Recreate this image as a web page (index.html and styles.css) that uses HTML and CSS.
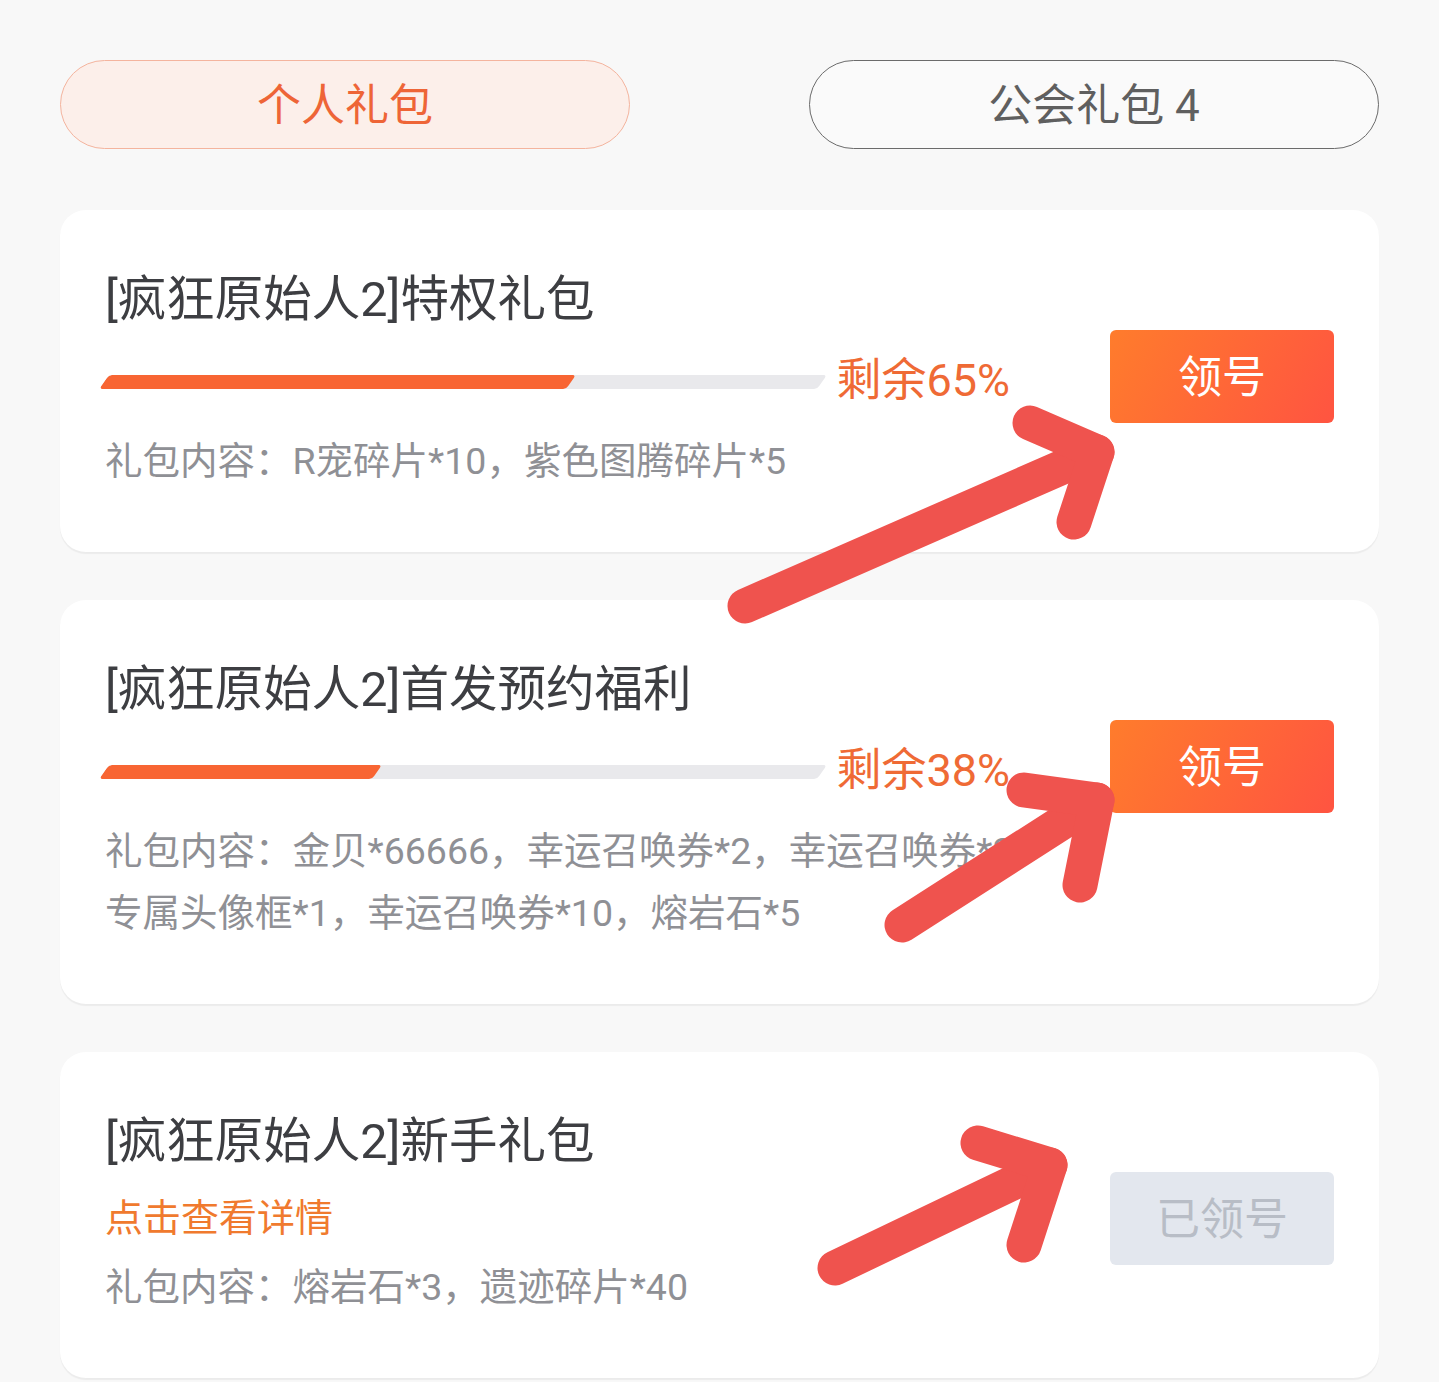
FILE: index.html
```html
<!DOCTYPE html>
<html lang="zh-CN">
<head>
  <meta charset="UTF-8" />
  <meta name="viewport" content="width=device-width, initial-scale=1.0" />
  <title>礼包</title>
  <link rel="stylesheet" href="styles.css">
</head>
<body>
  <div class="page">
    <div class="tabs">
      <div class="tab active">个人礼包</div>
      <div class="tab">公会礼包 4</div>
    </div>

    <div class="card">
      <div class="info">
        <div class="title">[疯狂原始人2]特权礼包</div>
        <div class="progress">
          <div class="bar"><div class="fill" style="width: 65%"></div></div>
          <span class="remain">剩余65%</span>
        </div>
        <div class="desc">礼包内容：R宠碎片*10，紫色图腾碎片*5</div>
      </div>
      <div class="side">
        <button class="btn">领号</button>
      </div>
    </div>

    <div class="card">
      <div class="info">
        <div class="title">[疯狂原始人2]首发预约福利</div>
        <div class="progress">
          <div class="bar"><div class="fill" style="width: 38%"></div></div>
          <span class="remain">剩余38%</span>
        </div>
        <div class="desc">礼包内容：金贝*66666，幸运召唤券*2，幸运召唤券*3，<br>专属头像框*1，幸运召唤券*10，熔岩石*5</div>
      </div>
      <div class="side">
        <button class="btn">领号</button>
      </div>
    </div>

    <div class="card">
      <div class="info">
        <div class="title">[疯狂原始人2]新手礼包</div>
        <div class="link">点击查看详情</div>
        <div class="desc">礼包内容：熔岩石*3，遗迹碎片*40</div>
      </div>
      <div class="side">
        <button class="btn done">已领号</button>
      </div>
    </div>
  </div>

  <!-- annotation arrows drawn over the screenshot -->
  <svg class="marks" width="1439" height="1382" viewBox="0 0 1439 1382">
    <g fill="none" stroke="#ef534e" stroke-width="35" stroke-linecap="round" stroke-linejoin="round">
      <path d="M745 606 L1097 452" />
      <path d="M1030 423 L1097 452 L1074 522" />
      <path d="M902 925 L1097 800" />
      <path d="M1024 790 L1097 800 L1080 885" />
      <path d="M835 1268 L1050 1165" />
      <path d="M978 1143 L1050 1165 L1024 1245" />
    </g>
  </svg>
</body>
</html>
```

FILE: styles.css
```css
body {
  margin: 0;
  background: #f8f8f8;
  font-family: Roboto, "Noto Sans CJK SC", sans-serif;
  position: relative;
}

.page {
  padding: 60px 60px;
}

.tabs {
  display: flex;
  justify-content: space-between;
}

.tab {
  width: 570px;
  height: 89px;
  box-sizing: border-box;
  padding-bottom: 5px;
  border: 1.5px solid #6b6b6b;
  border-radius: 999px;
  background: #fafafa;
  color: #5f5f5f;
  font-size: 44px;
  display: flex;
  align-items: center;
  justify-content: center;
}

.tab.active {
  background: #fcefea;
  border-color: #f4b49e;
  color: #ee6537;
}

.card {
  display: flex;
  margin-top: 61px;
  padding: 60px 45px;
  background: #fff;
  border-radius: 26px;
  box-shadow: 0 2px 1px rgba(0, 0, 0, 0.05);
}

.card + .card {
  margin-top: 48px;
}

.info {
  flex: 1;
  min-width: 0;
}

.title {
  font-size: 48.5px;
  line-height: 60px;
  color: #3d3e42;
}

.progress {
  display: flex;
  align-items: center;
  gap: 14px;
  height: 100px;
}

.bar {
  flex: 1;
  height: 14px;
  margin-top: 4px;
  margin-left: -1px;
  background: #e9e9ec;
  border-radius: 3px;
  transform: skewX(-35deg);
  overflow: hidden;
}

.fill {
  height: 100%;
  background: #f86533;
  border-radius: 3px;
}

.remain {
  flex: none;
  margin-top: -8px;
  font-size: 45px;
  color: #ef6a35;
}

.link {
  margin-top: 8px;
  font-size: 38px;
  line-height: 76px;
  color: #f07a2e;
}

.desc {
  font-size: 37.5px;
  line-height: 62px;
  color: #8f9095;
  white-space: nowrap;
}

.side {
  flex: none;
  width: 224px;
  margin-left: 100px;
  padding-top: 60px;
}

.btn {
  width: 224px;
  height: 93px;
  border: none;
  border-radius: 6px;
  background: linear-gradient(120deg, #ff7c2c, #ff5441);
  color: #fff;
  font-family: inherit;
  font-size: 44px;
  padding: 0 0 5px;
}

.btn.done {
  background: #e3e7ee;
  color: #b8bdc6;
}

.marks {
  position: absolute;
  top: 0;
  left: 0;
  pointer-events: none;
}
```
